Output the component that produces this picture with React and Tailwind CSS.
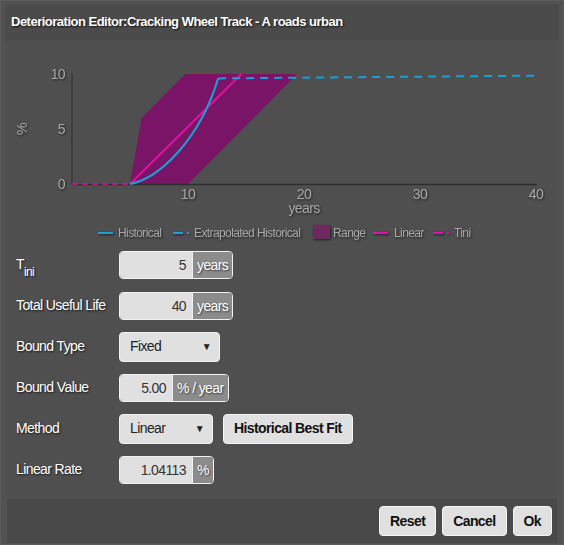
import { useState } from "react";

const X = (yr) => 65 + 11.6 * yr;
const Y = (v) => 144 - 11 * v;

const Chart = () => {
  const range = [
    [5, 0], [6, 6], [9.75, 10], [19.4, 10], [10, 0],
  ].map(([a, b]) => `${X(a)},${Y(b)}`).join(" ");

  const tickStyle = { filter: "drop-shadow(1px 1px 1px rgba(0,0,0,0.6))" };

  return (
    <svg width="550" height="206" className="block" style={{ fontFamily: "'Liberation Sans', Arial, sans-serif" }}>
      {/* range */}
      <polygon points={range} fill="#7a1466" />
      {/* axes */}
      <line x1={X(0)} y1={Y(10) - 1} x2={X(0)} y2={Y(0)} stroke="#2e2e2e" strokeWidth="1" />
      <line x1={X(0)} y1={Y(0) + 0.5} x2={X(40) + 1} y2={Y(0) + 0.5} stroke="#2e2e2e" strokeWidth="1.5" />
      {/* tini */}
      <line x1={X(0)} y1={Y(0)} x2={X(5)} y2={Y(0)} stroke="#e0129c" strokeWidth="1.5" strokeDasharray="6 4" />
      {/* linear */}
      <line x1={X(5)} y1={Y(0)} x2={X(14.6)} y2={Y(10)} stroke="#e0129c" strokeWidth="2" />
      {/* historical */}
      <path
        d={`M${X(5)},${Y(0)} C${X(7.5)},${Y(0.5)} ${X(11)},${Y(4)} ${X(12.6)},${Y(9.6)}`}
        fill="none" stroke="#1aa0d6" strokeWidth="2"
      />
      {/* extrapolated */}
      <line x1={X(12.6)} y1={Y(9.6)} x2={X(40)} y2={Y(9.85)} stroke="#1aa0d6" strokeWidth="2" strokeDasharray="8 6" />

      <g fill="#a8a8a8" fontSize="14" style={tickStyle}>
        <text x={X(0) - 7} y={Y(10) + 5} textAnchor="end">10</text>
        <text x={X(0) - 7} y={Y(5) + 5} textAnchor="end">5</text>
        <text x={X(0) - 7} y={Y(0) + 5} textAnchor="end">0</text>
        <text x={X(10)} y={Y(0) + 15} textAnchor="middle">10</text>
        <text x={X(20)} y={Y(0) + 15} textAnchor="middle">20</text>
        <text x={X(30)} y={Y(0) + 15} textAnchor="middle">30</text>
        <text x={X(40)} y={Y(0) + 15} textAnchor="middle">40</text>
        <text x={X(20)} y={Y(0) + 29} textAnchor="middle">years</text>
        <text x="0" y="0" textAnchor="middle" transform={`translate(20,${Y(5)}) rotate(-90)`}>%</text>
      </g>

      <g fontSize="12" fill="#a8a8a8" style={tickStyle}>
        <line x1="91" y1="193" x2="106" y2="193" stroke="#1aa0d6" strokeWidth="2" />
        <text x="111" y="197">Historical</text>
        <line x1="166" y1="193" x2="176" y2="193" stroke="#1aa0d6" strokeWidth="2" />
        <line x1="180" y1="193" x2="182" y2="193" stroke="#1aa0d6" strokeWidth="2" />
        <text x="187" y="197">Extrapolated Historical</text>
        <rect x="306" y="185" width="17" height="14" fill="#6e2a60" rx="1" />
        <text x="326" y="197">Range</text>
        <line x1="366" y1="193" x2="381" y2="193" stroke="#e0129c" strokeWidth="2" />
        <text x="387" y="197">Linear</text>
        <line x1="426" y1="193" x2="436" y2="193" stroke="#e0129c" strokeWidth="2" />
        <line x1="440" y1="193" x2="442" y2="193" stroke="#e0129c" strokeWidth="2" />
        <text x="447" y="197">Tini</text>
      </g>
    </svg>
  );
};

const InputAddon = ({ value, addon, inputW }) => (
  <div className="flex h-[28px] rounded-[4px] border border-[#f2f2f2] overflow-hidden">
    <div className={`${inputW} bg-[#e0e0e0] text-[#333] text-right pr-[6px] leading-[26px]`}>{value}</div>
    <div className="bg-[#8c8c8c] text-white px-[4px] leading-[26px] border-l border-[#f2f2f2] [text-shadow:1px_1px_2px_rgba(0,0,0,0.6)]">{addon}</div>
  </div>
);

const Select = ({ value, w }) => {
  const [val] = useState(value);
  return (
    <div className={`${w} h-[30px] rounded-[4px] border border-[#f2f2f2] bg-[#e0e0e0] text-[#222] flex items-center justify-between pl-[10px] pr-[8px]`}>
      <span>{val}</span>
      <span className="text-[10px]">▼</span>
    </div>
  );
};

const Row = ({ label, children }) => (
  <div className="flex items-center h-[41px]">
    <div className="w-[103px] text-white [text-shadow:1px_1px_2px_rgba(0,0,0,0.7)]">{label}</div>
    {children}
  </div>
);

const Btn = ({ children }) => (
  <button className="h-[30px] px-[10px] rounded-[4px] border border-[#f5f5f5] bg-[#e0e0e0] text-[#111] font-bold">
    {children}
  </button>
);

export default function App() {
  return (
    <div
      className="w-[564px] h-[545px] bg-[#525252] border border-[#5c5c5c] px-[6px] pt-[3px] flex flex-col text-[14px] tracking-[-0.6px]"
      style={{ fontFamily: "'Liberation Sans', Arial, sans-serif" }}
    >
      <div className="h-[36px] bg-[#4b4b4b] shadow-[0_2px_3px_rgba(0,0,0,0.25)] flex items-center pl-[4px] text-white text-[13px] tracking-[-0.5px] font-bold [text-shadow:1px_1px_2px_rgba(0,0,0,0.8)]">
        Deterioration Editor:Cracking Wheel Track - A roads urban
      </div>
      <div className="flex-1 bg-[#4f4f4f]">
        <Chart />
        <div className="pl-[9px] -mt-[2px]">
          <Row label={<span>T<sub className="text-[12px] align-[-4px]">ini</sub></span>}>
            <InputAddon value="5" addon="years" inputW="w-[72px]" />
          </Row>
          <Row label="Total Useful Life">
            <InputAddon value="40" addon="years" inputW="w-[72px]" />
          </Row>
          <Row label="Bound Type">
            <Select value="Fixed" w="w-[101px]" />
          </Row>
          <Row label="Bound Value">
            <InputAddon value="5.00" addon="% / year" inputW="w-[52px]" />
          </Row>
          <Row label="Method">
            <div className="flex items-center gap-[10px]">
              <Select value="Linear" w="w-[94px]" />
              <Btn>Historical Best Fit</Btn>
            </div>
          </Row>
          <Row label="Linear Rate">
            <InputAddon value="1.04113" addon="%" inputW="w-[72px]" />
          </Row>
        </div>
      </div>
      <div className="h-[44px] bg-[#494949] flex items-center justify-end gap-[6px] pr-[5px] mb-[1px]">
        <Btn>Reset</Btn>
        <Btn>Cancel</Btn>
        <Btn>Ok</Btn>
      </div>
    </div>
  );
}
